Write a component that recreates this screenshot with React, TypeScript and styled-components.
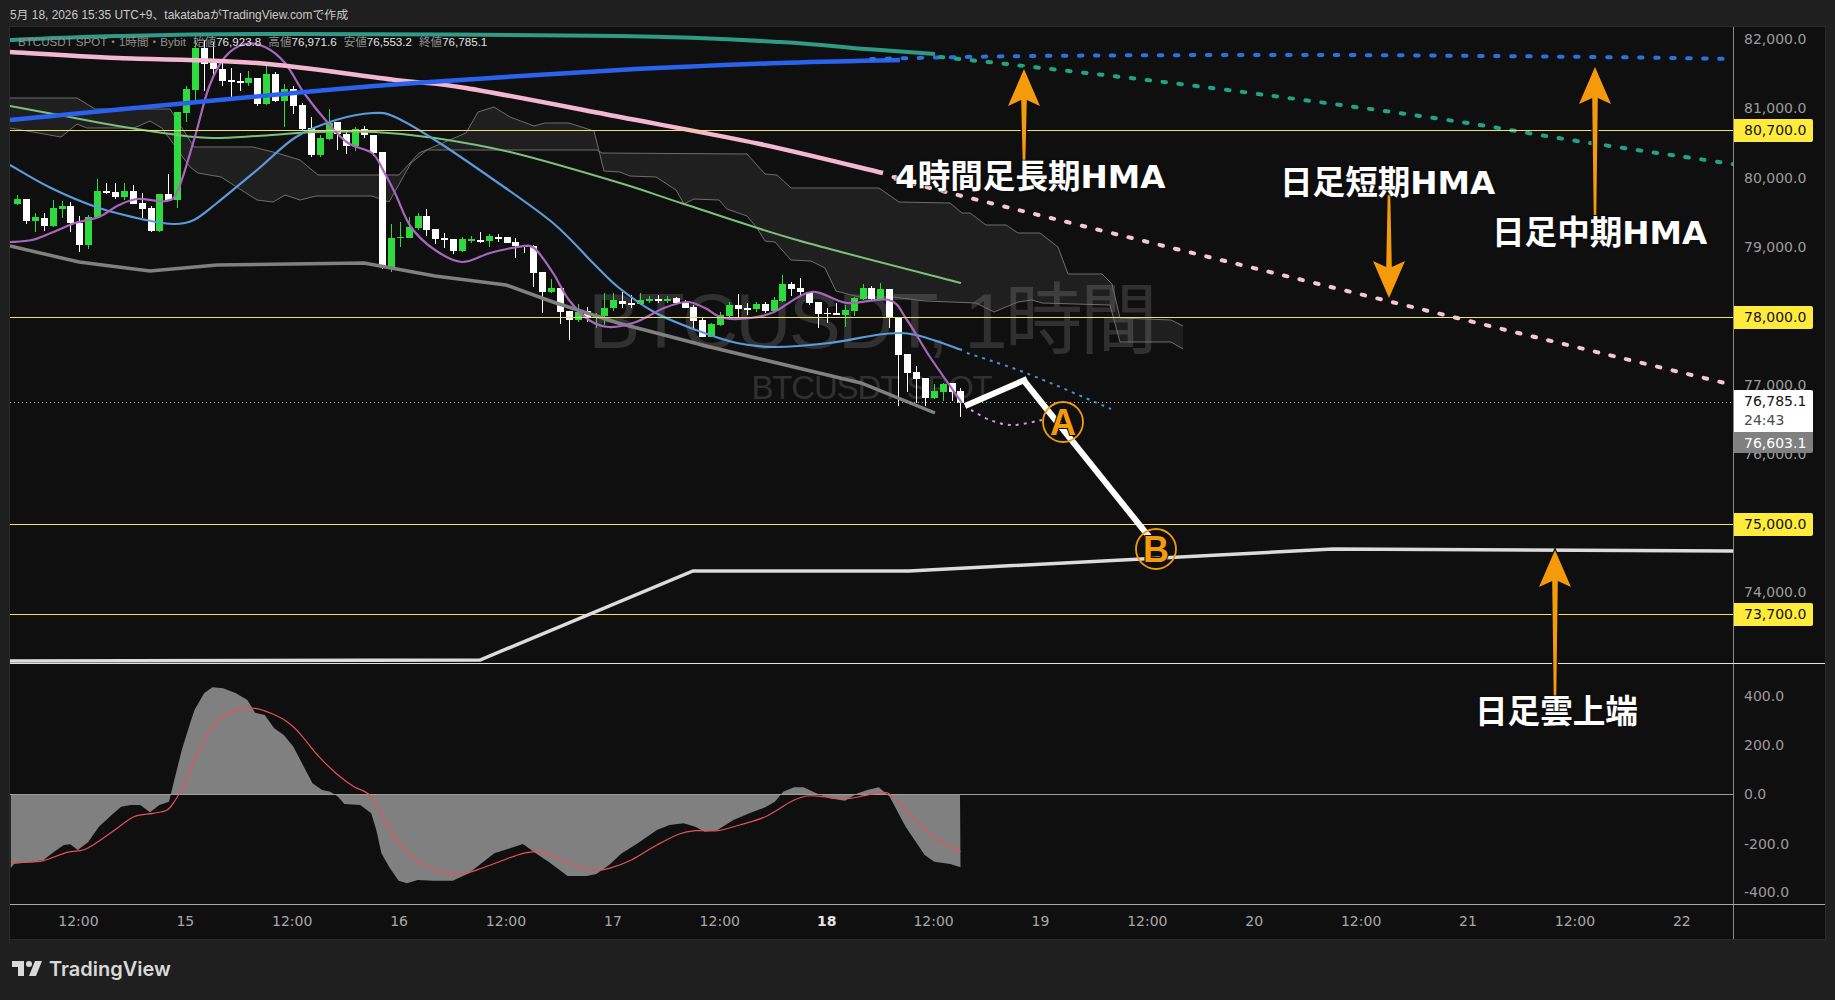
import React from 'react';
import styled, { createGlobalStyle } from 'styled-components';

type Pt = [number, number];
type Candle = [number, number, number, number, 'g' | 'w'];

const GlobalStyle = createGlobalStyle`
  html, body {
    margin: 0;
    padding: 0;
    background: #1f1f1f;
  }
`;

const Page = styled.div`
  width: 1835px;
  height: 1000px;
  display: flex;
  flex-direction: column;
  background: #1f1f1f;
  font-family: "Liberation Sans", "Noto Sans CJK JP", sans-serif;
  overflow: hidden;
`;

const Header = styled.div`
  height: 26px;
  padding: 0 0 1px 10px;
  display: flex;
  align-items: center;
  font-size: 11.9px;
  color: #c9c9c9;
`;

const ChartFrame = styled.div`
  position: relative;
  width: 1815px;
  height: 912px;
  margin-left: 10px;
  display: grid;
  grid-template-rows: 637px 241px 34px;
  background: #0f0f0f;
  box-shadow: 0 0 0 1px #2a2a2a;
`;

const Pane = styled.div<{ $line: string }>`
  display: grid;
  grid-template-columns: 1723px 92px;
  border-bottom: 1px solid ${(p) => p.$line};
`;

const Plot = styled.div`
  position: relative;
  overflow: hidden;
  background: #0f0f0f;
`;

const ChartSvg = styled.svg`
  position: absolute;
  inset: 0;
  display: block;
`;

const Axis = styled.div`
  position: relative;
  border-left: 1px solid #8a8a8a;
  font-family: "DejaVu Sans", sans-serif;
  font-size: 14px;
  color: #9c9c9c;
`;

const Tick = styled.div<{ $y: number }>`
  position: absolute;
  left: 10px;
  top: ${(p) => p.$y}px;
  transform: translateY(-50%);
  line-height: 16px;
  white-space: nowrap;
`;

const YellowTag = styled.div<{ $y: number }>`
  position: absolute;
  left: 0;
  top: ${(p) => p.$y}px;
  width: 69px;
  height: 23px;
  padding-left: 10px;
  display: flex;
  align-items: center;
  background: #ffeb3b;
  color: #131313;
  border-radius: 0 2px 2px 0;
`;

const PriceTag = styled.div`
  position: absolute;
  left: 0;
  top: 363px;
  width: 79px;
  display: flex;
  flex-direction: column;
`;

const LastPrice = styled.div`
  height: 42px;
  padding: 2px 0 0 10px;
  box-sizing: border-box;
  background: #ffffff;
  color: #131313;
  line-height: 19px;
  border-radius: 0 2px 0 0;

  span {
    display: block;
    color: #4a4a4a;
  }
`;

const ProjectedPrice = styled.div`
  height: 21px;
  padding-left: 10px;
  display: flex;
  align-items: center;
  background: #808080;
  color: #ffffff;
  border-radius: 0 0 2px 0;
`;

const TimeRow = styled.div`
  display: grid;
  grid-template-columns: 1723px 92px;
`;

const TimeTrack = styled.div`
  padding: 0 0 2px 15px;
  display: grid;
  grid-auto-flow: column;
  grid-auto-columns: 106.9px;
  align-items: center;
  font-family: "DejaVu Sans", sans-serif;
  font-size: 14px;
  color: #a8a8a8;
`;

const TimeLabel = styled.span<{ $today?: boolean }>`
  text-align: center;
  color: ${(p) => (p.$today ? '#e4e4e4' : '#a8a8a8')};
  font-weight: ${(p) => (p.$today ? 700 : 400)};
`;

const TimeCorner = styled.div`
  border-left: 1px solid #8a8a8a;
`;

const Legend = styled.div`
  position: absolute;
  left: 8px;
  top: 8px;
  display: flex;
  gap: 7px;
  font-size: 11.6px;
  line-height: 14px;
  color: #8f8f8f;
  white-space: nowrap;

  b {
    font-weight: 400;
    color: #e2e2e2;
  }
`;

const Watermark = styled.div`
  position: absolute;
  inset: 0;
  padding-top: 255px;
  display: flex;
  flex-direction: column;
  align-items: center;
  gap: 11px;
  color: #303030;
  line-height: 1;
  white-space: nowrap;
`;

const WatermarkTitle = styled.div`
  font-size: 78px;
  letter-spacing: -3px;
`;

const WatermarkSub = styled.div`
  font-size: 33px;
  letter-spacing: -1.2px;
`;

const Overlay = styled.svg`
  position: absolute;
  inset: 0;
  pointer-events: none;
`;

const Note = styled.div<{ $x: number; $y: number }>`
  position: absolute;
  left: ${(p) => p.$x}px;
  top: ${(p) => p.$y}px;
  font-family: "DejaVu Sans", "Noto Sans CJK JP", sans-serif;
  font-size: 32.6px;
  font-weight: 700;
  line-height: 1;
  color: #ffffff;
  white-space: nowrap;
  text-shadow: 0 0 2px #0f0f0f, 0 0 2px #0f0f0f;
`;

const Footer = styled.div`
  flex: 1;
  padding: 0 0 2px 12px;
  display: flex;
  align-items: center;
  gap: 7px;
  color: #d9d9d9;
`;

const LogoText = styled.span`
  font-family: Inter, sans-serif;
  font-size: 20px;
  font-weight: 600;
`;

// candles read off the chart: body top, body bottom, wick top, wick bottom
const candlesA: Candle[] = [
  [596, 612, 586, 615, 'g'], [597, 662, 597, 672, 'w'], [652, 662, 640, 695, 'g'], [654, 678, 640, 692, 'w'],
  [624, 678, 600, 680, 'g'], [618, 627, 602, 655, 'g'], [618, 668, 605, 695, 'w'], [668, 735, 648, 757, 'w'],
  [652, 735, 645, 748, 'g'], [573, 652, 538, 655, 'g'], [573, 576, 548, 582, 'w'], [576, 592, 548, 596, 'w'],
  [574, 592, 550, 600, 'g'], [573, 612, 555, 612, 'w'], [608, 627, 578, 655, 'w'], [623, 693, 617, 695, 'w'],
  [582, 693, 582, 695, 'g'], [582, 600, 522, 600, 'w'], [336, 600, 336, 625, 'g'], [268, 338, 258, 365, 'g'],
  [145, 270, 120, 310, 'g'], [145, 192, 120, 272, 'w'], [188, 208, 125, 235, 'w'], [208, 242, 185, 258, 'w'],
  [240, 243, 205, 295, 'w'], [243, 247, 220, 272, 'w'], [234, 248, 213, 258, 'g'], [235, 312, 235, 318, 'w'],
  [222, 312, 195, 315, 'g'], [222, 303, 215, 305, 'w'], [268, 302, 252, 380, 'g'], [268, 317, 258, 342, 'w'],
  [315, 387, 308, 390, 'w'], [385, 466, 352, 472, 'w'], [414, 466, 405, 470, 'g'], [368, 416, 328, 420, 'g'],
  [365, 402, 365, 450, 'w'], [402, 438, 395, 462, 'w'], [388, 438, 380, 452, 'g'], [388, 406, 378, 415, 'w'],
  [405, 458, 405, 468, 'w'], [456, 800, 456, 808, 'w'], [714, 800, 672, 815, 'g'], [710, 713, 665, 740, 'g'],
  [682, 714, 650, 715, 'g'], [648, 684, 640, 690, 'g'], [648, 690, 628, 708, 'w'], [686, 717, 686, 732, 'w'],
  [715, 718, 700, 745, 'w'], [717, 753, 717, 762, 'w'], [718, 752, 710, 755, 'g'], [717, 720, 708, 730, 'g'],
  [720, 723, 696, 730, 'w'], [709, 724, 703, 740, 'g'], [712, 715, 702, 725, 'w'], [710, 729, 710, 730, 'w'],
  [725, 739, 715, 775, 'w'], [737, 740, 735, 758, 'w'], [738, 820, 735, 862, 'w'], [816, 877, 816, 940, 'w'],
  [864, 877, 838, 880, 'g'], [864, 937, 864, 972, 'w'], [933, 960, 933, 1020, 'w'], [935, 960, 912, 965, 'g'],
  [933, 950, 922, 965, 'w'], [944, 947, 940, 985, 'g'], [923, 948, 878, 975, 'g'], [900, 925, 880, 932, 'g'],
];

const candlesB: Candle[] = [
  [183, 192, 155, 205, 'w'], [189, 191, 165, 205, 'w'], [181, 192, 158, 195, 'g'], [178, 182, 168, 188, 'g'],
  [177, 179, 165, 188, 'w'], [177, 180, 168, 188, 'g'], [173, 190, 170, 190, 'w'], [190, 204, 180, 205, 'w'],
  [201, 242, 195, 270, 'w'], [240, 290, 235, 292, 'w'], [252, 290, 248, 292, 'g'], [225, 254, 215, 258, 'g'],
  [195, 228, 185, 240, 'g'], [195, 207, 162, 230, 'w'], [205, 208, 190, 225, 'w'], [192, 208, 185, 215, 'g'],
  [192, 213, 185, 220, 'w'], [180, 212, 170, 215, 'g'], [132, 182, 105, 185, 'g'], [132, 147, 125, 168, 'w'],
  [145, 157, 115, 165, 'w'], [155, 190, 155, 195, 'w'], [186, 222, 186, 263, 'w'], [218, 220, 205, 248, 'w'],
  [219, 221, 190, 222, 'w'], [210, 224, 195, 260, 'g'], [175, 212, 170, 228, 'g'], [145, 177, 132, 180, 'g'],
  [144, 178, 138, 180, 'w'], [147, 177, 130, 180, 'g'], [147, 232, 147, 265, 'w'], [232, 345, 232, 497, 'w'],
  [341, 400, 341, 455, 'w'], [396, 416, 378, 490, 'w'], [414, 474, 414, 497, 'w'], [454, 474, 433, 476, 'g'],
  [431, 456, 430, 482, 'g'], [430, 455, 430, 482, 'w'], [453, 490, 445, 530, 'w'],
];

const candles: Candle[] = [
  ...candlesA.map(([a, b, c, d, k]): Candle => [a / 3, b / 3, c / 3, d / 3, k]),
  ...candlesB.map(([a, b, c, d, k]): Candle => [240 + a / 3, 240 + b / 3, 240 + c / 3, 240 + d / 3, k]),
];

const pinkLine: Pt[] = [[10, 52], [118, 58], [257, 63], [395, 80], [466, 88], [620, 117], [760, 144], [883, 173]];
const pinkDots: Pt[] = [[895, 177], [946, 192], [1457, 318], [1733, 385]];
const royalLine: Pt[] = [[10, 120], [198, 102], [316, 91], [415, 83], [620, 70], [780, 63], [900, 60]];
const royalDots: Pt[] = [[871, 59], [1032, 56], [1319, 55], [1595, 57], [1733, 59]];
const tealLine: Pt[] = [[10, 40], [117, 36], [292, 34], [620, 36], [780, 42], [866, 49], [935, 54]];
const tealDots: Pt[] = [[940, 57], [1024, 66], [1204, 87], [1434, 118], [1577, 141], [1733, 164]];
const greenLine: Pt[] = [
  [10, 106], [59, 115], [118, 126], [178, 135], [213, 138], [257, 136], [316, 132], [375, 132], [435, 138],
  [514, 153], [620, 183], [684, 204], [797, 240], [961, 283],
];
const blueLine: Pt[] = [
  [10, 165], [51, 188], [99, 208], [146, 220], [174, 224], [194, 220], [217, 203], [257, 170], [296, 137],
  [336, 120], [373, 113], [395, 117], [435, 140], [494, 180], [553, 223], [593, 263], [618, 287], [654, 312],
  [696, 330], [737, 343], [774, 347], [829, 343], [884, 334], [916, 335], [962, 350],
];
const blueDots: Pt[] = [[967, 353], [1026, 373], [1111, 409]];
const purpleLine: Pt[] = [
  [10, 242], [32, 240], [51, 233], [75, 223], [99, 217], [119, 205], [138, 199], [166, 201], [178, 190],
  [194, 140], [209, 87], [225, 57], [245, 44], [265, 47], [285, 63], [304, 93], [328, 123], [348, 143],
  [372, 153], [383, 170], [395, 193], [411, 227], [435, 250], [462, 262], [490, 253], [518, 247], [534, 248],
  [553, 273], [569, 300], [589, 320], [609, 327], [636, 322], [664, 308], [687, 302], [705, 308], [723, 318],
  [751, 318], [774, 312], [811, 292], [847, 303], [889, 300], [907, 320], [930, 357], [962, 403],
];
const purpleDots: Pt[] = [[971, 410], [990, 420], [1013, 425], [1042, 420]];
const grayLine: Pt[] = [
  [10, 246], [79, 262], [150, 271], [217, 265], [364, 263], [435, 276], [506, 285], [553, 302], [618, 323],
  [710, 347], [861, 383], [935, 413],
];
const kumoLine: Pt[] = [[10, 661], [480, 660], [693, 571], [909, 571], [1333, 549], [1733, 551]];

const spanA: Pt[] = [
  [10, 98], [77, 98], [95, 109], [170, 109], [194, 147], [253, 147], [277, 153], [300, 160], [318, 175], [399, 175],
  [419, 153], [466, 133], [478, 112], [494, 107], [510, 117], [534, 126], [545, 123], [569, 123], [594, 131], [604, 171],
  [620, 172], [630, 176], [656, 177], [676, 190], [684, 204], [694, 199], [719, 200], [727, 209], [747, 216], [757, 228],
  [765, 241], [775, 242], [791, 260], [811, 261], [825, 268], [836, 291], [859, 297], [893, 297], [925, 301], [976, 303],
  [994, 312], [1018, 302], [1032, 300], [1042, 303], [1110, 305], [1120, 342], [1171, 342], [1183, 349],
];
const spanB: Pt[] = [
  [10, 128], [61, 137], [77, 124], [87, 128], [134, 128], [150, 121], [162, 128], [190, 167], [198, 173], [221, 177],
  [257, 200], [273, 202], [285, 195], [300, 200], [316, 196], [372, 196], [389, 202], [411, 163], [427, 150], [597, 150],
  [602, 153], [747, 154], [765, 174], [777, 175], [791, 188], [879, 188], [899, 202], [950, 203], [962, 213], [970, 213],
  [986, 225], [1006, 225], [1018, 233], [1040, 233], [1058, 247], [1068, 274], [1102, 274], [1112, 284], [1120, 318],
  [1171, 320], [1183, 326],
];

const oscArea: Pt[] = [
  [17, 655], [22, 642], [40, 638], [68, 630], [85, 605], [100, 585], [110, 583], [122, 600], [138, 577], [155, 530],
  [175, 495], [190, 470], [205, 465], [220, 465], [235, 487], [250, 465], [265, 455], [272, 400], [285, 300], [298, 220],
  [305, 180], [320, 130], [333, 112], [350, 115], [370, 130], [388, 150], [400, 188], [415, 195], [430, 235], [445, 255],
  [460, 290], [475, 345], [490, 400], [505, 420], [518, 425], [530, 440], [540, 462], [565, 465], [582, 490], [590, 540],
  [598, 610], [610, 650], [625, 692], [638, 700], [655, 690], [680, 692], [710, 692], [735, 670], [755, 640], [775, 610],
  [800, 595], [820, 582], [840, 610], [860, 635], [890, 678], [920, 678], [935, 672], [955, 645], [975, 610], [1000, 580],
  [1030, 540], [1050, 525], [1072, 520], [1090, 530], [1105, 545], [1125, 540], [1150, 510], [1175, 490], [1200, 472],
  [1215, 455], [1228, 425], [1245, 412], [1260, 412], [1280, 430], [1300, 445], [1325, 452], [1345, 430], [1360, 420],
  [1378, 412], [1395, 440], [1420, 530], [1450, 615], [1465, 635], [1490, 642], [1506, 652],
];
const oscSignal: Pt[] = [
  [17, 635], [40, 637], [68, 632], [105, 607], [130, 600], [150, 580], [180, 540], [210, 500], [240, 490], [262, 480],
  [275, 450], [290, 400], [310, 310], [330, 240], [350, 200], [375, 178], [400, 175], [425, 190], [450, 215], [470, 250],
  [500, 320], [530, 375], [555, 410], [578, 432], [595, 480], [615, 550], [640, 610], [670, 650], [700, 668], [725, 672],
  [755, 655], [790, 630], [820, 610], [845, 605], [870, 620], [900, 645], [930, 660], [955, 655], [990, 630], [1030, 585],
  [1065, 552], [1090, 542], [1125, 542], [1160, 525], [1200, 500], [1240, 455], [1265, 438], [1290, 440], [1325, 447],
  [1355, 437], [1385, 427], [1400, 440], [1430, 500], [1460, 555], [1490, 590], [1506, 605],
];

const fromOscZoom = (p: Pt[]): Pt[] => p.map(([x, y]) => [x / 1.568, 650 + y / 3]);

const poly = (p: Pt[]) => p.map(([x, y]) => `${x.toFixed(1)},${y.toFixed(1)}`).join(' ');

const smooth = (p: Pt[]) => {
  let d = `M${p[0][0]} ${p[0][1]}`;
  for (let i = 0; i < p.length - 1; i++) {
    const a = p[Math.max(i - 1, 0)];
    const b = p[i];
    const c = p[i + 1];
    const e = p[Math.min(i + 2, p.length - 1)];
    const c1 = [b[0] + (c[0] - a[0]) / 6, b[1] + (c[1] - a[1]) / 6];
    const c2 = [c[0] - (e[0] - b[0]) / 6, c[1] - (e[1] - b[1]) / 6];
    d += ` C${c1[0].toFixed(1)} ${c1[1].toFixed(1)} ${c2[0].toFixed(1)} ${c2[1].toFixed(1)} ${c[0].toFixed(1)} ${c[1].toFixed(1)}`;
  }
  return d;
};

// arrow pointing from the foot of the stem to the tip
const arrow = (x: number, tip: number, foot: number) => {
  const dir = foot > tip ? 1 : -1;
  const base = tip + dir * 37;
  const notch = tip + dir * 31;
  return `M${x} ${tip} L${x + 16} ${base} L${x + 2.8} ${notch} L${x + 1.3} ${foot} L${x - 1.3} ${foot} L${x - 2.8} ${notch} L${x - 16} ${base} Z`;
};

const priceTicks: [string, number][] = [
  ['82,000.0', 38.5], ['81,000.0', 107.5], ['80,000.0', 177.5], ['79,000.0', 246.5], ['77,000.0', 385], ['76,000.0', 454],
  ['74,000.0', 591.5],
];
const levels: [string, number][] = [['80,700.0', 130], ['78,000.0', 317], ['75,000.0', 524], ['73,700.0', 614]];
const oscTicks: [string, number][] = [['400.0', 696], ['200.0', 745], ['0.0', 794], ['-200.0', 844], ['-400.0', 892]];
const timeLabels = ['12:00', '15', '12:00', '16', '12:00', '17', '12:00', '18', '12:00', '19', '12:00', '20', '12:00', '21', '12:00', '22'];

const App: React.FC = () => {
  const areaPoints = fromOscZoom(oscArea);
  const signal = fromOscZoom(oscSignal);

  return (
    <Page>
      <GlobalStyle />
      <Header>5月 18, 2026 15:35 UTC+9、takatabaがTradingView.comで作成</Header>
      <ChartFrame>
        <Pane $line="#e2e2e2">
          <Plot>
            <Watermark>
              <WatermarkTitle>BTCUSDT, 1時間</WatermarkTitle>
              <WatermarkSub>BTCUSDT SPOT</WatermarkSub>
            </Watermark>
            <ChartSvg width="1723" height="636" viewBox="10 27 1723 636">
              <polygon points={poly([...spanA, ...[...spanB].reverse()])} fill="#ffffff" fillOpacity="0.07" />
              <polyline points={poly(spanA)} fill="none" stroke="#6e6e6e" strokeWidth="1" />
              <polyline points={poly(spanB)} fill="none" stroke="#6e6e6e" strokeWidth="1" />

              {candles.map(([top, bottom, wickTop, wickBottom, kind], i) => {
                const x = Math.round(17 + 8.9 * i);
                const color = kind === 'g' ? '#2edb3f' : '#ffffff';
                return (
                  <g key={i} fill={color} shapeRendering="crispEdges">
                    <rect x={x} y={wickTop} width="1" height={wickBottom - wickTop} />
                    <rect x={x - 3} y={top} width="7" height={Math.max(bottom - top, 1.5)} />
                  </g>
                );
              })}

              <polyline points={poly(grayLine)} fill="none" stroke="#808080" strokeWidth="3.5" />
              <path d={smooth(greenLine)} fill="none" stroke="#7dbf7d" strokeWidth="2" />
              <path d={smooth(blueLine)} fill="none" stroke="#5a9bdc" strokeWidth="2.2" />
              <path d={smooth(purpleLine)} fill="none" stroke="#a966bd" strokeWidth="2.2" />
              <path d={smooth(tealLine)} fill="none" stroke="#2f9a86" strokeWidth="4" />
              <path d={smooth(pinkLine)} fill="none" stroke="#f3b8cf" strokeWidth="4.5" />
              <path d={smooth(royalLine)} fill="none" stroke="#2a62f0" strokeWidth="4.5" />

              <path d={smooth(pinkDots)} fill="none" stroke="#f6c6d6" strokeWidth="4" strokeDasharray="3.5 12.5" strokeLinecap="round" />
              <path d={smooth(royalDots)} fill="none" stroke="#2e6fe6" strokeWidth="4" strokeDasharray="3.5 12.5" strokeLinecap="round" />
              <path d={smooth(tealDots)} fill="none" stroke="#1fa585" strokeWidth="4" strokeDasharray="3.5 12.5" strokeLinecap="round" />
              <path d={smooth(blueDots)} fill="none" stroke="#4a90d9" strokeWidth="2" strokeDasharray="3 5" />
              <path d={smooth(purpleDots)} fill="none" stroke="#c89ad8" strokeWidth="2" strokeDasharray="3 5" />

              <line x1="10" y1="402" x2="1733" y2="402" stroke="#b0b0b0" strokeWidth="1" strokeDasharray="1 3" shapeRendering="crispEdges" />
              {levels.map(([label, y]) => (
                <line key={label} x1="10" y1={y + 0.5} x2="1733" y2={y + 0.5} stroke="#efe06a" strokeWidth="1" shapeRendering="crispEdges" />
              ))}

              <polyline points={poly(kumoLine)} fill="none" stroke="#dcdcdc" strokeWidth="3.5" />
              <line x1="965" y1="406" x2="1027" y2="379" stroke="#ffffff" strokeWidth="6" />
              <line x1="1025" y1="382" x2="1150" y2="538" stroke="#ffffff" strokeWidth="6" />

              <circle cx="1063" cy="422" r="20" fill="none" stroke="#f59a0a" strokeWidth="1.8" />
              <text x="1063" y="435" textAnchor="middle" fontFamily="Liberation Sans" fontWeight="700" fontSize="36" fill="#f59a0a" stroke="#0f0f0f" strokeWidth="2" style={{ paintOrder: 'stroke' }}>A</text>
              <circle cx="1156" cy="549" r="20" fill="none" stroke="#f59a0a" strokeWidth="1.8" />
              <text x="1156" y="562" textAnchor="middle" fontFamily="Liberation Sans" fontWeight="700" fontSize="36" fill="#f59a0a" stroke="#0f0f0f" strokeWidth="2" style={{ paintOrder: 'stroke' }}>B</text>
            </ChartSvg>
            <Legend>
              <span>BTCUSDT SPOT・1時間・Bybit</span>
              <span>始値<b>76,923.8</b></span>
              <span>高値<b>76,971.6</b></span>
              <span>安値<b>76,553.2</b></span>
              <span>終値<b>76,785.1</b></span>
            </Legend>
          </Plot>
          <Axis>
            {priceTicks.map(([label, y]) => (
              <Tick key={label} $y={y - 27}>{label}</Tick>
            ))}
            {levels.map(([label, y]) => (
              <YellowTag key={label} $y={y - 38.5}>{label}</YellowTag>
            ))}
            <PriceTag>
              <LastPrice>76,785.1<span>24:43</span></LastPrice>
              <ProjectedPrice>76,603.1</ProjectedPrice>
            </PriceTag>
          </Axis>
        </Pane>

        <Pane $line="#a8a8a8">
          <Plot>
            <ChartSvg width="1723" height="240" viewBox="10 664 1723 240">
              <polygon points={poly([[10.8, 794], ...areaPoints, [960, 794]])} fill="#808080" />
              <line x1="10" y1="794.5" x2="1733" y2="794.5" stroke="#9c9c9c" strokeWidth="1" shapeRendering="crispEdges" />
              <path d={smooth(signal)} fill="none" stroke="#e8505a" strokeWidth="1.2" />
            </ChartSvg>
          </Plot>
          <Axis>
            {oscTicks.map(([label, y]) => (
              <Tick key={label} $y={y - 664}>{label}</Tick>
            ))}
          </Axis>
        </Pane>

        <TimeRow>
          <TimeTrack>
            {timeLabels.map((label, i) => (
              <TimeLabel key={i} $today={label === '18'}>{label}</TimeLabel>
            ))}
          </TimeTrack>
          <TimeCorner />
        </TimeRow>

        <Overlay width="1815" height="912" viewBox="10 27 1815 912">
          <g fill="#f59a0a" stroke="#0f0f0f" strokeWidth="2.4" style={{ paintOrder: 'stroke' }}>
            <path d={arrow(1024, 69, 163)} />
            <path d={arrow(1389, 298, 195)} />
            <path d={arrow(1595, 67, 215)} />
            <path d={arrow(1555, 550, 696)} />
          </g>
        </Overlay>
        <Note $x={885} $y={134}>4時間足長期HMA</Note>
        <Note $x={1270} $y={140}>日足短期HMA</Note>
        <Note $x={1482} $y={190}>日足中期HMA</Note>
        <Note $x={1465} $y={669}>日足雲上端</Note>
      </ChartFrame>
      <Footer>
        <svg width="30" height="15" viewBox="2 6 30 15" fill="currentColor">
          <path d="M14 6H2v6h6v9h6V6Zm12 15h-7l6-15h7l-6 15Zm-7-9a3 3 0 1 0 0-6 3 3 0 0 0 0 6Z" />
        </svg>
        <LogoText>TradingView</LogoText>
      </Footer>
    </Page>
  );
};

export default App;
